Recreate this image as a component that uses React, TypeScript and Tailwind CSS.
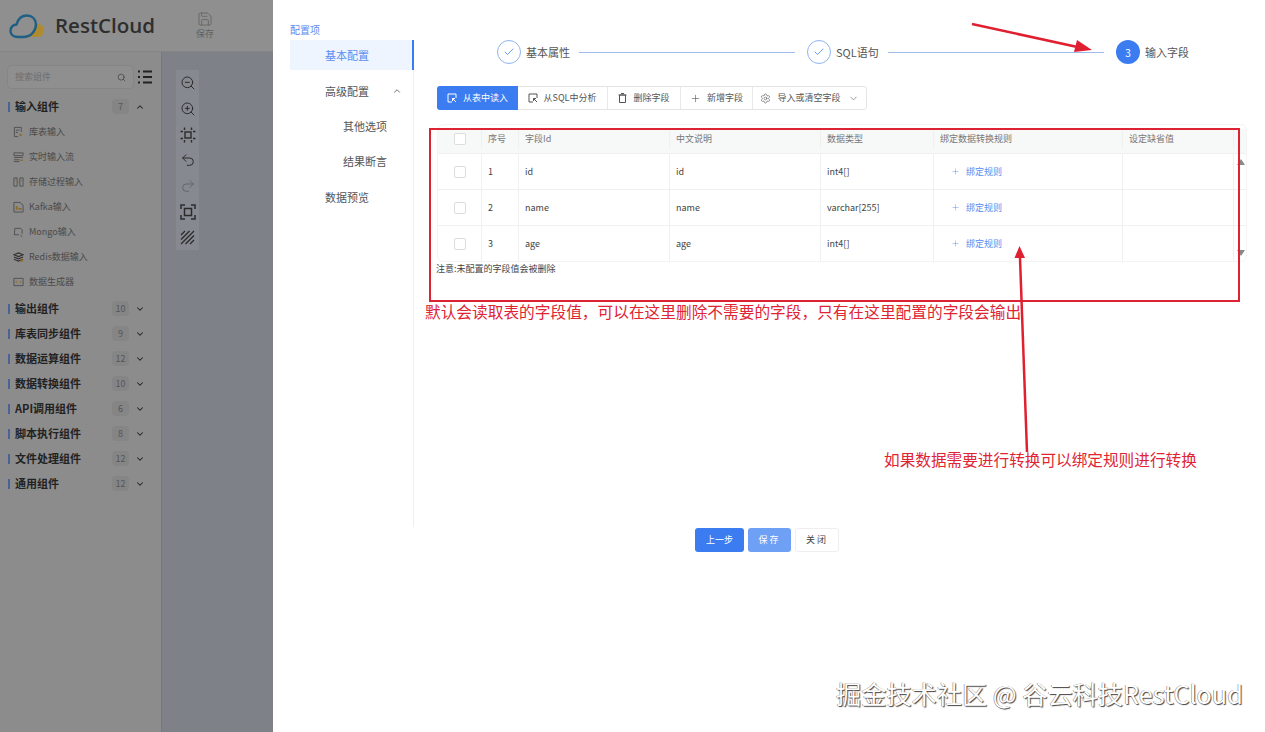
import React from 'react';
import { Check, ChevronDown, ChevronUp, Plus, Redo2, Save, Search, Settings, Undo2, ZoomIn, ZoomOut } from 'lucide-react';

// sidebar glyphs, drawn small with a dim accent like the source
const ink = '#4f4f4f';
const accent = '#8a6a2a';

const inputItems: { label: string; icon: React.ReactNode }[] = [
  {
    label: '库表输入',
    icon: (
      <>
        <path d="M1.500 1h7.500v5M1.500 1v10h4" stroke={ink} />
        <path d="M3 4h4M3 6.500h2.500" stroke={ink} />
        <path d="M7 7.500l3.500 1.800L7 11z" fill={accent} />
      </>
    ),
  },
  {
    label: '实时输入流',
    icon: (
      <>
        <path d="M1 1.500h10v3H1zM1 6.500h10M1 9h6M1 11h6" stroke={ink} />
        <path d="M8 9.500h3" stroke={accent} strokeWidth="1.500" />
      </>
    ),
  },
  {
    label: '存储过程输入',
    icon: (
      <>
        <path d="M1 1.500h3.500v9H1zM7.500 1.500H11v9H7.500z" stroke={ink} />
        <path d="M5.500 6h1.500" stroke={accent} />
        <path d="M2 4h1.500M8.500 4H10" stroke={accent} />
      </>
    ),
  },
  {
    label: 'Kafka输入',
    icon: (
      <>
        <path d="M1 1h6.500L11 4v7.500H1z" stroke={ink} />
        <path d="M3 5h2v4H3zM6 7h3.500v2H6z" fill={accent} />
      </>
    ),
  },
  {
    label: 'Mongo输入',
    icon: (
      <>
        <path d="M2 2h6.500L10 4v4M2 2l-.5 7h5" stroke={ink} />
        <path d="M8 9.500l2 1.500" stroke={ink} />
      </>
    ),
  },
  {
    label: 'Redis数据输入',
    icon: (
      <>
        <path d="M1 3.500L6 1.500l5 2-5 2zM1 6l5 2 5-2M1 8.500l5 2 5-2" stroke="#333333" strokeWidth="1.200" />
        <path d="M8 8.500h3v2.500H8z" fill={accent} />
      </>
    ),
  },
  {
    label: '数据生成器',
    icon: (
      <>
        <path d="M1 2h10v8H1z" stroke={ink} />
        <path d="M4.500 4.500L3 6l1.500 1.500M7.500 4.500L9 6 7.500 7.500" stroke={accent} />
      </>
    ),
  },
];

const groups = [
  { label: '输出组件', count: 10 },
  { label: '库表同步组件', count: 9 },
  { label: '数据运算组件', count: 12 },
  { label: '数据转换组件', count: 10 },
  { label: 'API调用组件', count: 6 },
  { label: '脚本执行组件', count: 8 },
  { label: '文件处理组件', count: 12 },
  { label: '通用组件', count: 12 },
];

const rows = [
  { no: 1, id: 'id', desc: 'id', type: 'int4[]' },
  { no: 2, id: 'name', desc: 'name', type: 'varchar[255]' },
  { no: 3, id: 'age', desc: 'age', type: 'int4[]' },
];

const gridCols = 'grid grid-cols-[44px_37px_151px_151px_113px_189px_111px]';

function Logo() {
  return (
    <svg width="36" height="26" viewBox="0 0 36 26" fill="none">
      <path d="M27 10.500c5 0 8 3 8 7s-3 6.500-7 6.500h-9c4-2 8.500-6 8-13.500z" fill="#b08a2e" />
      <path d="M9 24c-4.500 0-7.500-2.500-7.500-6 0-3.500 2.500-6 6-6.500C9 6 13 2.500 18 2.500c5 0 8.500 3.500 9 8.500 0 6-4 13-13 13H9z" stroke="#1f5f85" strokeWidth="2.400" />
    </svg>
  );
}

function GroupHead({ label, count, open }: { label: string; count: number; open?: boolean }) {
  return (
    <div className="flex h-[25px] items-center pl-2 pr-[16px]">
      <span className="h-[10px] w-[2px] bg-[#4a6396]" />
      <span className="ml-[5px] flex-1 text-[11px] font-bold text-[#222222]">{label}</span>
      <span className="flex h-[15px] w-[17px] items-center justify-center rounded-sm bg-[#858585] text-[9px] text-[#555555]">{count}</span>
      <span className="ml-[6px]">
        {open ? <ChevronUp size={10} strokeWidth={2.500} className="text-[#222222]" /> : <ChevronDown size={10} strokeWidth={2.500} className="text-[#222222]" />}
      </span>
    </div>
  );
}

function Sidebar() {
  return (
    <div className="w-[162px] shrink-0 border-r border-[#75797e] bg-[#8c8c8c] pt-[14px]">
      <div className="flex items-center pl-2">
        <div className="flex h-[22px] w-[125px] items-center justify-between rounded-sm bg-[#8f8f8f] px-[7px] text-[9px] text-[#6e6e6e] ring-1 ring-[#858585]">
          <span>搜索组件</span>
          <Search size={9} className="text-[#444444]" />
        </div>
        <svg width="16" height="14" viewBox="0 0 16 14" className="ml-[4px]">
          <path d="M1 1.500h2M6 1.500h9M1 7h2M6 7h9M1 12.500h2M6 12.500h9" stroke="#222222" strokeWidth="2" />
        </svg>
      </div>
      <div className="mt-[6px]">
        <GroupHead label="输入组件" count={7} open />
        {inputItems.map(({ label, icon }) => (
          <div key={label} className="flex h-[25px] items-center gap-[5px] pl-[13px] text-[9px] text-[#4a4a4a]">
            <svg width="11" height="12" viewBox="0 0 12 12" fill="none" strokeWidth="1">{icon}</svg>
            <span>{label}</span>
          </div>
        ))}
      </div>
      <div className="mt-[2px]">
        {groups.map((g) => (
          <GroupHead key={g.label} label={g.label} count={g.count} />
        ))}
      </div>
    </div>
  );
}

function Canvas() {
  return (
    <div className="flex-1 bg-[#7e8288] pl-[14px] pt-[18px]">
      <div className="flex h-[180px] w-[23px] flex-col items-center justify-between bg-[#868a90] py-[5px] text-[#2b2b2b]">
        <ZoomOut size={16} strokeWidth={1.500} />
        <ZoomIn size={16} strokeWidth={1.500} />
        <svg width="16" height="16" viewBox="0 0 16 16" fill="none" stroke="currentColor" strokeWidth="1.400">
          <rect x="5" y="5" width="6" height="6" />
          <path d="M4.500 0.500v2.500M0.500 4.500h2.500M11.500 0.500v2.500M15.500 4.500h-2.500M4.500 15.500v-2.500M0.500 11.500h2.500M11.500 15.500v-2.500M15.500 11.500h-2.500" />
        </svg>
        <Undo2 size={16} strokeWidth={1.500} />
        <Redo2 size={16} strokeWidth={1.500} className="text-[#63676c]" />
        <svg width="16" height="16" viewBox="0 0 16 16" fill="none" stroke="currentColor" strokeWidth="1.500">
          <rect x="4.500" y="4.500" width="7" height="7" />
          <path d="M1 5V1h4M11 1h4v4M15 11v4h-4M5 15H1v-4" />
        </svg>
        <svg width="15" height="15" viewBox="0 0 15 15" fill="none" stroke="currentColor" strokeWidth="1.300">
          <path d="M1 5l4-4M1 9.500L9.500 1M1 14L14 1M5.500 14L14 5.500M10 14l4-4" />
        </svg>
      </div>
    </div>
  );
}

function LeftPanel() {
  return (
    <div className="flex w-[273px] shrink-0 flex-col">
      <div className="flex h-[52px] shrink-0 items-center border-b border-[#858585] bg-[#8f8f8f] pl-[9px]">
        <Logo />
        <span className="ml-[10px] font-['Open_Sans',sans-serif] text-[20.500px] font-semibold text-[#2e2e2e]">RestCloud</span>
        <div className="ml-[41px] flex flex-col items-center text-[9px] text-[#5f5f5f]">
          <Save size={16} strokeWidth={1.200} />
          <span>保存</span>
        </div>
      </div>
      <div className="flex flex-1">
        <Sidebar />
        <Canvas />
      </div>
    </div>
  );
}

function ConfigMenu() {
  return (
    <div className="w-[141px] shrink-0 pl-[17px] pt-[23px]">
      <div className="text-[10px] leading-[14px] text-[#5b8def]">配置项</div>
      <div className="h-[487px] w-[124px] border-r border-[#f0f0f0] text-[11px] text-[#555555]">
        <div className="mt-[3px] flex h-[30px] w-[124px] items-center border-r-2 border-[#3b7cf0] bg-[#eef5ff] pl-[35px] text-[#5b8def]">基本配置</div>
        <div className="mt-[6px] flex h-[30px] items-center justify-between pl-[35px] pr-[11px]">
          <span>高级配置</span>
          <ChevronUp size={10} strokeWidth={2} />
        </div>
        <div className="mt-[5px] flex h-[30px] items-center pl-[53px]">其他选项</div>
        <div className="mt-[5px] flex h-[30px] items-center pl-[53px]">结果断言</div>
        <div className="mt-[6px] flex h-[30px] items-center pl-[35px]">数据预览</div>
      </div>
    </div>
  );
}

function DoneStep({ label, labelWidth, line }: { label: string; labelWidth: string; line: string }) {
  return (
    <div className="flex items-center">
      <span className="flex h-6 w-6 items-center justify-center rounded-full border border-[#8fb4ee]">
        <Check size={12} strokeWidth={1.500} className="text-[#3b7cf0]" />
      </span>
      <span className={`ml-[5px] text-[11px] whitespace-nowrap text-[#555555] ${labelWidth}`}>{label}</span>
      <span className={`h-px bg-[#9dbcec] ${line}`} />
    </div>
  );
}

function Steps() {
  return (
    <div className="flex h-6 items-center gap-[12px] pl-[60px]">
      <DoneStep label="基本属性" labelWidth="w-[45px]" line="ml-[8px] w-[216px]" />
      <DoneStep label="SQL语句" labelWidth="w-[42px]" line="ml-[10px] w-[216px]" />
      <div className="flex items-center">
        <span className="flex h-6 w-6 items-center justify-center rounded-full bg-[#3b7cf0] text-[10px] text-white">3</span>
        <span className="ml-[5px] text-[11px] text-[#555555]">输入字段</span>
      </div>
    </div>
  );
}

function PickIcon() {
  return (
    <svg width="10" height="10" viewBox="0 0 10 10" fill="none" stroke="currentColor" strokeWidth="1">
      <path d="M5 9H1V1h8v4" />
      <path d="M5.500 5.500L9 9M5.500 5.500h2.500M5.500 5.500V8" />
    </svg>
  );
}

function Toolbar() {
  const btn = 'flex h-full items-center justify-center gap-[6px] border-l border-[#e8e8e8]';
  return (
    <div className="mt-[22px] flex h-[24px] w-[430px] rounded-[3px] border border-[#e4e4e4] text-[9px] text-[#555555]">
      <div className="-m-px flex h-[24px] w-[81px] items-center justify-center gap-[6px] rounded-l-[3px] bg-[#3b7cf0] text-white">
        <PickIcon />
        <span>从表中读入</span>
      </div>
      <div className="flex h-full w-[90px] items-center justify-center gap-[6px]">
        <PickIcon />
        <span>从SQL中分析</span>
      </div>
      <div className={`${btn} w-[73px]`}>
        <svg width="9" height="10" viewBox="0 0 9 10" fill="none" stroke="currentColor" strokeWidth="1">
          <path d="M1.500 2h6v7.500h-6zM3 .5h3M.5 2h8" />
        </svg>
        <span>删除字段</span>
      </div>
      <div className={`${btn} w-[72px]`}>
        <Plus size={11} strokeWidth={1.300} />
        <span>新增字段</span>
      </div>
      <div className={`${btn} flex-1`}>
        <Settings size={11} strokeWidth={1.300} />
        <span>导入或清空字段</span>
        <ChevronDown size={11} strokeWidth={1.300} className="ml-[1px]" />
      </div>
    </div>
  );
}

function BoxCell() {
  return (
    <div className="flex items-center justify-center border-r border-[#f0f0f0]">
      <span className="h-3 w-3 rounded-[2px] border border-[#dddddd] bg-white" />
    </div>
  );
}

function FieldTable() {
  const cell = 'flex items-center border-r border-[#f0f0f0] pl-[6px]';
  return (
    <div className="relative mt-[14px] w-[810px]">
      <div className="rounded-md border border-[#f4f4f4] pt-[4px]">
        <div className={`${gridCols} h-[24px] bg-[#f7f8f8] pb-[4px] text-[9px] text-[#777777]`}>
          <BoxCell />
          <div className={cell}>序号</div>
          <div className={cell}>字段Id</div>
          <div className={cell}>中文说明</div>
          <div className={cell}>数据类型</div>
          <div className={cell}>绑定数据转换规则</div>
          <div className={cell}>设定缺省值</div>
        </div>
        {rows.map((r) => (
          <div key={r.no} className={`${gridCols} h-[36px] border-t border-[#f0f0f0] text-[9px] text-[#444444]`}>
            <BoxCell />
            <div className={cell}>{r.no}</div>
            <div className={cell}>{r.id}</div>
            <div className={cell}>{r.desc}</div>
            <div className={cell}>{r.type}</div>
            <div className="flex items-center gap-[6px] border-r border-[#f0f0f0] pl-[17px] text-[#5b8def]">
              <Plus size={9} strokeWidth={1.200} />
              <span>绑定规则</span>
            </div>
            <div className={cell} />
          </div>
        ))}
      </div>
      <span className="absolute right-[2px] top-[35px] h-0 w-0 border-x-[4px] border-b-[6px] border-x-transparent border-b-[#888888]" />
      <span className="absolute right-[2px] bottom-[6px] h-0 w-0 border-x-[4px] border-t-[6px] border-x-transparent border-t-[#888888]" />
    </div>
  );
}

function Footer() {
  return (
    <div className="mt-[253px] flex justify-center gap-1 pr-[168px] text-[9px]">
      <button className="h-[24px] w-[49px] rounded-[3px] bg-[#3b7cf0] text-white">上一步</button>
      <button className="h-[24px] w-[43px] rounded-[3px] bg-[#6ea0f5] tracking-[2px] text-white">保存</button>
      <button className="h-[24px] w-[44px] rounded-[3px] border border-[#eeeeee] tracking-[2px] text-[#444444]">关闭</button>
    </div>
  );
}

function Annotations() {
  return (
    <>
      <div className="absolute left-[429px] top-[128px] h-[174px] w-[811px] border-2 border-[#dd2233]" />
      <div className="absolute left-[425px] top-[301px] text-[15.700px] leading-[22px] text-[#e02433]">默认会读取表的字段值，可以在这里删除不需要的字段，只有在这里配置的字段会输出</div>
      <div className="absolute left-[884px] top-[449px] text-[15.650px] leading-[22px] text-[#e02433]">如果数据需要进行转换可以绑定规则进行转换</div>
      <svg className="pointer-events-none absolute left-0 top-0" width="1265" height="732" fill="none">
        <path d="M972 24L1082 48" stroke="#e02030" strokeWidth="2.500" />
        <path d="M1092 50L1077 40L1074 52z" fill="#e02030" />
        <path d="M1027 452L1020 258" stroke="#e02030" strokeWidth="2.500" />
        <path d="M1019.500 246L1014.500 258L1025 258z" fill="#e02030" />
      </svg>
      <div className="absolute left-[836px] top-[676px] text-[25.200px] leading-[34px] text-white [text-shadow:1px_1px_1px_#444444,-0.5px_-0.5px_0.5px_#777777]">掘金技术社区 @ 谷云科技RestCloud</div>
    </>
  );
}

export default function App() {
  return (
    <div className="relative flex h-[732px] w-[1265px] overflow-hidden bg-white font-['Noto_Sans_CJK_SC','Noto_Sans',sans-serif]">
      <LeftPanel />
      <div className="flex flex-1 bg-white">
        <ConfigMenu />
        <div className="flex-1 pl-[23px] pt-[40px]">
          <Steps />
          <Toolbar />
          <FieldTable />
          <div className="-ml-px mt-px text-[9px] leading-[12px] text-[#444444]">注意:未配置的字段值会被删除</div>
          <Footer />
        </div>
      </div>
      <Annotations />
    </div>
  );
}
